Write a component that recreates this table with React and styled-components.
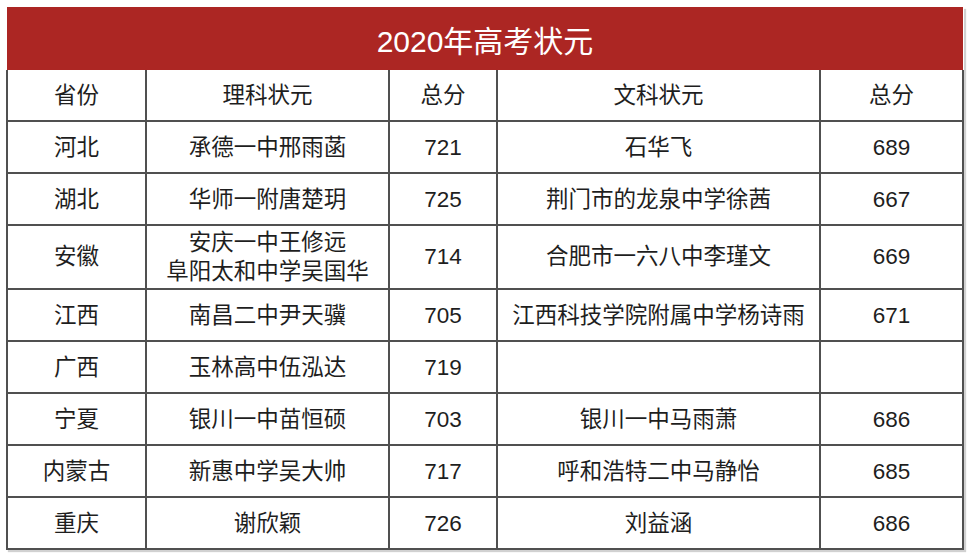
import React from "react";
import styled, { createGlobalStyle } from "styled-components";

const Global = createGlobalStyle`
  html, body { margin: 0; padding: 0; background: #ffffff; }
  body { font-family: "Liberation Sans", "Noto Sans CJK SC", sans-serif; }
`;

const Page = styled.div`
  width: 972px;
  height: 554px;
  padding: 7px 0 0 6px;
  box-sizing: border-box;
  background: #fff;
`;

const Sheet = styled.div`
  width: 958px;
  box-shadow: 2px 2px 1px rgba(0, 0, 0, 0.18);
`;

const Title = styled.div`
  height: 63px;
  margin: 0 1px;
  background: #ac2623;
  color: #fff;
  font-size: 30px;
  display: flex;
  align-items: center;
  justify-content: center;
`;

const Grid = styled.div`
  display: grid;
  grid-template-columns: 137px 241px 106px 321px 141px;
  grid-template-rows: 50px 50px 50px 62px 50px 50px 50px 50px 50px;
  gap: 2px;
  padding: 0 2px 2px 2px;
  background: #505050;
`;

const Cell = styled.div`
  background: #fff;
  color: #1e1e1e;
  font-size: 22.5px;
  line-height: 29px;
  display: flex;
  flex-direction: column;
  align-items: center;
  justify-content: center;
  text-align: center;
  box-sizing: border-box;
  padding-bottom: ${(p) => (p.$tall ? "1px" : "0")};
`;

const rows = [
  ["河北", ["承德一中邢雨菡"], "721", "石华飞", "689"],
  ["湖北", ["华师一附唐楚玥"], "725", "荆门市的龙泉中学徐茜", "667"],
  ["安徽", ["安庆一中王修远", "阜阳太和中学吴国华"], "714", "合肥市一六八中李瑾文", "669"],
  ["江西", ["南昌二中尹天骥"], "705", "江西科技学院附属中学杨诗雨", "671"],
  ["广西", ["玉林高中伍泓达"], "719", "", ""],
  ["宁夏", ["银川一中苗恒硕"], "703", "银川一中马雨萧", "686"],
  ["内蒙古", ["新惠中学吴大帅"], "717", "呼和浩特二中马静怡", "685"],
  ["重庆", ["谢欣颖"], "726", "刘益涵", "686"],
];

export default function App() {
  return (
    <Page>
      <Global />
      <Sheet>
        <Title>2020年高考状元</Title>
        <Grid>
          <Cell>省份</Cell>
          <Cell>理科状元</Cell>
          <Cell>总分</Cell>
          <Cell>文科状元</Cell>
          <Cell>总分</Cell>
          {rows.map((r) => {
            const tall = r[1].length > 1;
            return (
              <React.Fragment key={r[0]}>
                <Cell $tall={tall}>{r[0]}</Cell>
                <Cell $tall={tall}>
                  {r[1].map((l) => (
                    <span key={l}>{l}</span>
                  ))}
                </Cell>
                <Cell $tall={tall}>{r[2]}</Cell>
                <Cell $tall={tall}>{r[3]}</Cell>
                <Cell $tall={tall}>{r[4]}</Cell>
              </React.Fragment>
            );
          })}
        </Grid>
      </Sheet>
    </Page>
  );
}
